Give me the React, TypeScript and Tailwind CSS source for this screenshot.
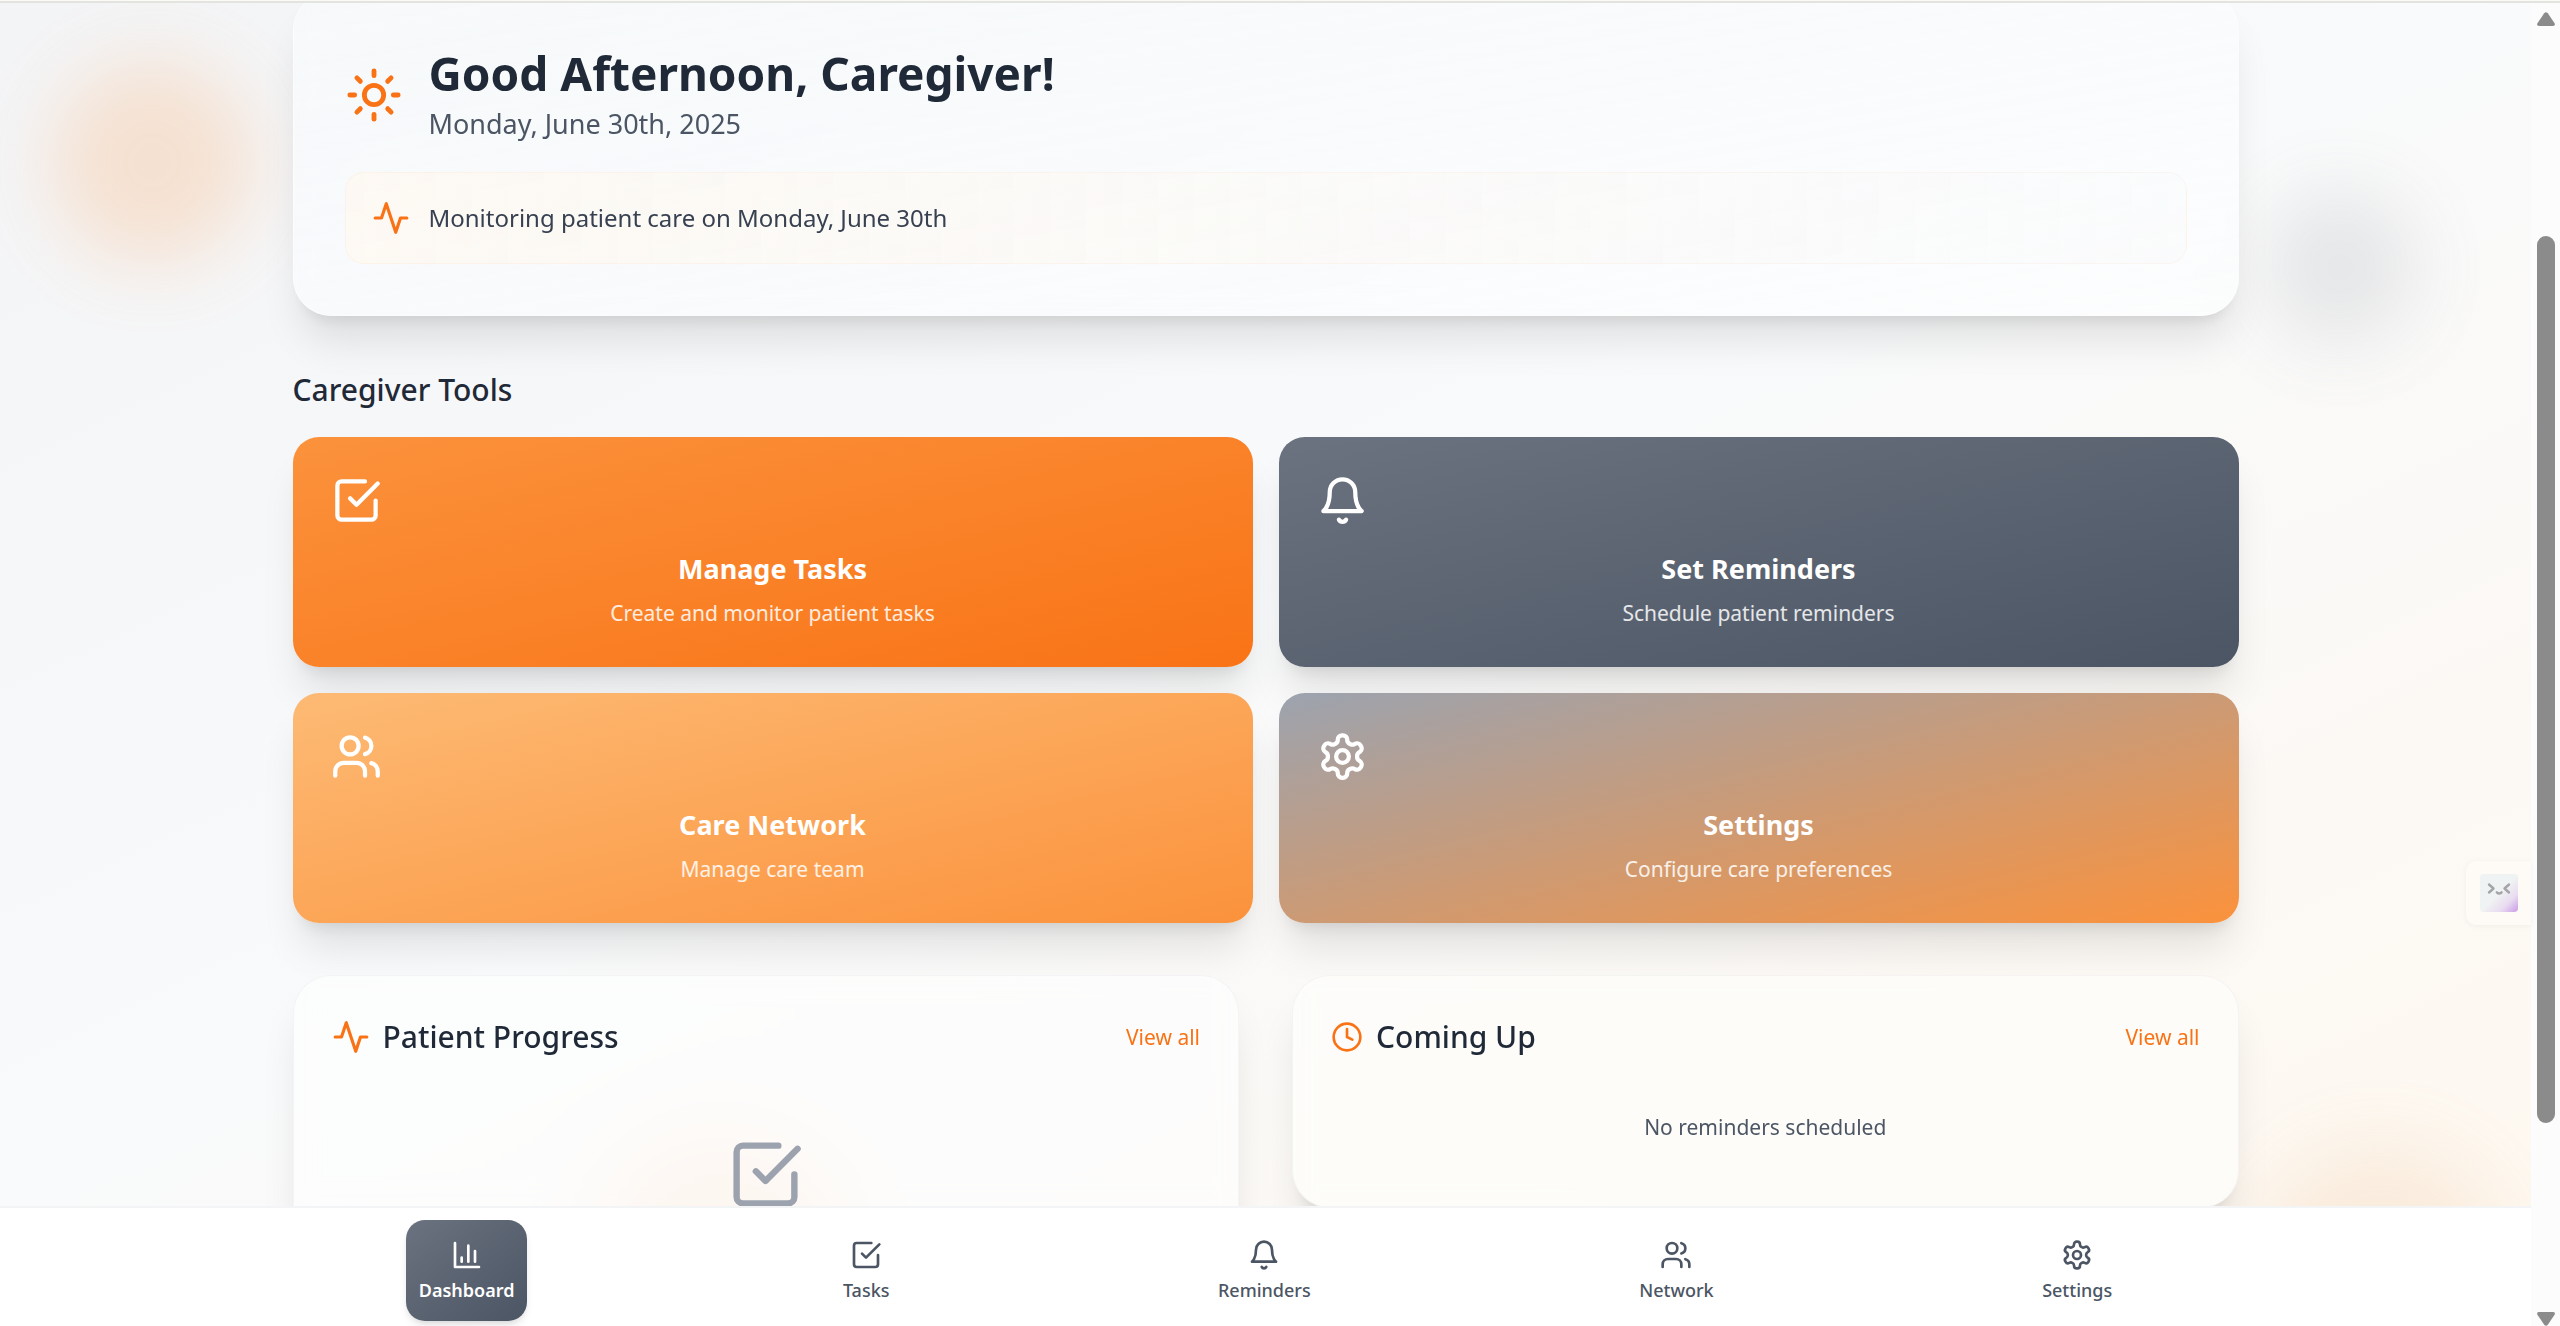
import type { ReactNode } from "react";

function Icon({ className, children }: { className: string; children: ReactNode }) {
  return (
    <svg
      className={`shrink-0 ${className}`}
      viewBox="0 0 24 24"
      fill="none"
      stroke="currentColor"
      strokeWidth="2"
      strokeLinecap="round"
      strokeLinejoin="round"
      aria-hidden="true"
    >
      {children}
    </svg>
  );
}

type IconProps = { className: string };

const SunIcon = ({ className }: IconProps) => (
  <Icon className={className}>
    <circle cx="12" cy="12" r="4" />
    <path d="M12 2v2" />
    <path d="M12 20v2" />
    <path d="m4.93 4.93 1.41 1.41" />
    <path d="m17.66 17.66 1.41 1.41" />
    <path d="M2 12h2" />
    <path d="M20 12h2" />
    <path d="m6.34 17.66-1.41 1.41" />
    <path d="m19.07 4.93-1.41 1.41" />
  </Icon>
);

const PulseIcon = ({ className }: IconProps) => (
  <Icon className={className}>
    <path d="M22 12h-4l-3 9L9 3l-3 9H2" />
  </Icon>
);

const ClockIcon = ({ className }: IconProps) => (
  <Icon className={className}>
    <circle cx="12" cy="12" r="10" />
    <path d="M12 6v6l4 2" />
  </Icon>
);

const TaskIcon = ({ className }: IconProps) => (
  <Icon className={className}>
    <path d="m9 11 3 3L22 4" />
    <path d="M21 12v7a2 2 0 0 1-2 2H5a2 2 0 0 1-2-2V5a2 2 0 0 1 2-2h11" />
  </Icon>
);

const BellIcon = ({ className }: IconProps) => (
  <Icon className={className}>
    <path d="M6 8a6 6 0 0 1 12 0c0 7 3 9 3 9H3s3-2 3-9" />
    <path d="M10.3 21a1.94 1.94 0 0 0 3.4 0" />
  </Icon>
);

const PeopleIcon = ({ className }: IconProps) => (
  <Icon className={className}>
    <path d="M16 21v-2a4 4 0 0 0-4-4H6a4 4 0 0 0-4 4v2" />
    <circle cx="9" cy="7" r="4" />
    <path d="M22 21v-2a4 4 0 0 0-3-3.87" />
    <path d="M16 3.13a4 4 0 0 1 0 7.75" />
  </Icon>
);

const GearIcon = ({ className }: IconProps) => (
  <Icon className={className}>
    <path d="M12.22 2h-.44a2 2 0 0 0-2 2v.18a2 2 0 0 1-1 1.73l-.43.25a2 2 0 0 1-2 0l-.15-.08a2 2 0 0 0-2.73.73l-.22.38a2 2 0 0 0 .73 2.73l.15.1a2 2 0 0 1 1 1.72v.51a2 2 0 0 1-1 1.74l-.15.09a2 2 0 0 0-.73 2.73l.22.38a2 2 0 0 0 2.73.73l.15-.08a2 2 0 0 1 2 0l.43.25a2 2 0 0 1 1 1.73V20a2 2 0 0 0 2 2h.44a2 2 0 0 0 2-2v-.18a2 2 0 0 1 1-1.73l.43-.25a2 2 0 0 1 2 0l.15.08a2 2 0 0 0 2.73-.73l.22-.39a2 2 0 0 0-.73-2.73l-.15-.08a2 2 0 0 1-1-1.74v-.5a2 2 0 0 1 1-1.74l.15-.09a2 2 0 0 0 .73-2.73l-.22-.38a2 2 0 0 0-2.73-.73l-.15.08a2 2 0 0 1-2 0l-.43-.25a2 2 0 0 1-1-1.73V4a2 2 0 0 0-2-2z" />
    <circle cx="12" cy="12" r="3" />
  </Icon>
);

const ChartIcon = ({ className }: IconProps) => (
  <Icon className={className}>
    <path d="M3 3v18h18" />
    <path d="M18 17V9" />
    <path d="M13 17V5" />
    <path d="M8 17v-3" />
  </Icon>
);

const tools = [
  {
    title: "Manage Tasks",
    text: "Create and monitor patient tasks",
    icon: TaskIcon,
    fill: "bg-[linear-gradient(to_bottom_right,#fb923c,#f97316)]",
  },
  {
    title: "Set Reminders",
    text: "Schedule patient reminders",
    icon: BellIcon,
    fill: "bg-[linear-gradient(to_bottom_right,#6b7280,#4b5563)]",
  },
  {
    title: "Care Network",
    text: "Manage care team",
    icon: PeopleIcon,
    fill: "bg-[linear-gradient(to_bottom_right,#fdba74,#fb923c)]",
  },
  {
    title: "Settings",
    text: "Configure care preferences",
    icon: GearIcon,
    fill: "bg-[linear-gradient(to_bottom_right,#9ca3af,#fb923c)]",
  },
];

const navItems = [
  { label: "Dashboard", icon: ChartIcon, active: true },
  { label: "Tasks", icon: TaskIcon, active: false },
  { label: "Reminders", icon: BellIcon, active: false },
  { label: "Network", icon: PeopleIcon, active: false },
  { label: "Settings", icon: GearIcon, active: false },
];

const SOFT_SHADOW = "shadow-[0_32px_40px_-8px_rgba(0,0,0,0.1),0_13px_16px_-10px_rgba(0,0,0,0.1)]";

function Backdrop() {
  return (
    <div className="pointer-events-none absolute inset-0 overflow-hidden" aria-hidden="true">
      <div className="absolute top-[57px] left-[50px] size-[205px] rounded-full bg-[#fb923c] opacity-20 blur-[38px]" />
      <div className="absolute top-[187px] right-[114px] size-[154px] rounded-full bg-[#6b7280] opacity-[0.14] blur-[38px]" />
      <div className="absolute -bottom-[184px] left-[592px] size-[256px] rounded-full bg-[#fb923c] opacity-20 blur-[38px]" />
      <div className="absolute -bottom-[192px] right-[24px] size-[256px] rounded-full bg-[#e0954f] opacity-[0.12] blur-[38px]" />
    </div>
  );
}

function PanelHeader({ icon, title }: { icon: ReactNode; title: string }) {
  return (
    <div className="flex items-center justify-between">
      <div className="flex items-center gap-[13px]">
        {icon}
        <h3 className="text-[30px] leading-[45px] font-medium text-[#1f2937]">{title}</h3>
      </div>
      <button type="button" className="text-[21px] leading-8 text-[#f97316]">
        View all
      </button>
    </div>
  );
}

function ScrollTrack() {
  return (
    <div className="flex w-[29px] shrink-0 flex-col items-center bg-[#fcfcfc] pt-[9px]" aria-hidden="true">
      <svg className="h-[14px] w-[18px]" viewBox="0 0 18 14" fill="#8b8b8b">
        <path d="M7.2 1.2Q9-.8 10.8 1.2L17.6 11.2Q18.6 14 16 14H2Q-.6 14 .4 11.2Z" />
      </svg>
      <div className="flex w-full flex-1 flex-col items-center pt-[210px] pb-[189px]">
        <div className="w-[18px] flex-1 rounded-full bg-[#8b8b8b]" />
      </div>
      <svg className="h-[14px] w-[18px]" viewBox="0 0 18 14" fill="#8b8b8b">
        <path d="M7.2 12.8Q9 14.8 10.8 12.8L17.6 2.8Q18.6 0 16 0H2Q-.6 0 .4 2.8Z" />
      </svg>
    </div>
  );
}

export default function App() {
  return (
    <div className="flex h-screen flex-col overflow-hidden bg-white font-['Noto_Sans','Open_Sans',sans-serif]">
      <div className="h-[3px] shrink-0 border-b-2 border-[#e3e4de] bg-[#fbfaf6]" />
      <div className="flex min-h-0 flex-1">
        <div className="relative flex min-w-0 flex-1 flex-col">
          <main className="relative min-h-0 flex-1 overflow-hidden bg-[linear-gradient(to_bottom_right,#f3f4f6,#f9fafb_50%,#fef8f0)]">
            <Backdrop />
            <div className="relative mx-auto -mt-[11px] w-full max-w-[2048px] px-[51px]">
              <header
                className={`rounded-[38px] border border-white/40 bg-[linear-gradient(to_bottom_right,rgba(247,249,251,0.85),rgba(253,254,255,0.7))] p-[51px] backdrop-blur-md ${SOFT_SHADOW}`}
              >
                <div className="mb-[26px] flex items-center gap-[26px]">
                  <SunIcon className="size-[58px] text-[#f97316]" />
                  <div>
                    <h1 className="text-[46px] leading-[58px] font-bold text-[#1f2937]">Good Afternoon, Caregiver!</h1>
                    <p className="text-[27px] leading-[44px] text-[#4b5563]">Monday, June 30th, 2025</p>
                  </div>
                </div>
                <div className="flex items-center gap-[19px] rounded-[19px] border border-[#f97316]/5 bg-[linear-gradient(to_right,rgba(255,247,237,0.6),rgba(249,250,251,0.4))] p-[26px]">
                  <PulseIcon className="size-[38px] text-[#f97316]" />
                  <p className="text-[24px] leading-[38px] text-[#374151]">Monitoring patient care on Monday, June 30th</p>
                </div>
              </header>

              <section className="mt-[51px]">
                <h2 className="mb-[25px] text-[30px] leading-[45px] font-medium text-[#1f2937]">Caregiver Tools</h2>
                <div className="grid grid-cols-2 gap-[26px]">
                  {tools.map(({ title, text, icon: ToolIcon, fill }) => (
                    <button
                      key={title}
                      type="button"
                      className={`flex flex-col rounded-[26px] p-[38px] text-center text-white ${fill} ${SOFT_SHADOW}`}
                    >
                      <ToolIcon className="size-[51px]" />
                      <span className="mt-5 w-full text-[27px] leading-[45px] font-bold">{title}</span>
                      <span className="mt-[6px] w-full text-[21px] leading-8 text-white/85">{text}</span>
                    </button>
                  ))}
                </div>
              </section>

              <div className="mt-[52px] grid grid-cols-2 items-start gap-[53px]">
                <section
                  className={`rounded-[38px] border border-[#e5e7eb]/40 bg-[#fdfefe]/70 p-[38px] backdrop-blur-md ${SOFT_SHADOW}`}
                >
                  <PanelHeader icon={<PulseIcon className="size-[38px] text-[#f97316]" />} title="Patient Progress" />
                  <div className="mt-[26px] flex justify-center py-[51px]">
                    <TaskIcon className="size-[77px] text-[#9ca3af]" />
                  </div>
                </section>
                <section
                  className={`rounded-[38px] border border-[#e5e7eb]/40 bg-[#fdfdfb]/70 p-[38px] backdrop-blur-md ${SOFT_SHADOW}`}
                >
                  <PanelHeader icon={<ClockIcon className="size-8 text-[#f97316]" />} title="Coming Up" />
                  <p className="mt-[26px] py-[26px] text-center text-[21px] leading-8 text-[#4b5563]">
                    No reminders scheduled
                  </p>
                </section>
              </div>
            </div>
          </main>

          <nav className="shrink-0 border-t-2 border-[#f3f4f6] bg-white" aria-label="Main">
            <div className="mx-auto flex max-w-[2048px] justify-around px-[13px] pt-3 pb-[5px]">
              {navItems.map(({ label, icon: NavIcon, active }) => (
                <button
                  key={label}
                  type="button"
                  aria-current={active ? "page" : undefined}
                  className={
                    active
                      ? "flex flex-col items-center gap-[6px] rounded-[19px] bg-[linear-gradient(to_bottom_right,#6b7280,#4b5563)] px-[13px] pt-[19px] pb-[18px] text-[18px] leading-[26px] font-semibold text-white shadow-[0_6px_10px_-2px_rgba(0,0,0,0.1),0_3px_6px_-3px_rgba(0,0,0,0.1)]"
                      : "flex flex-col items-center gap-[6px] rounded-[19px] px-[13px] pt-[19px] pb-[18px] text-[18px] leading-[26px] font-medium text-[#4b5563]"
                  }
                >
                  <NavIcon className="size-8" />
                  {label}
                </button>
              ))}
            </div>
          </nav>

          <button
            type="button"
            aria-label="Open assistant"
            className="absolute top-[858px] right-0 flex h-[64px] w-[65px] items-center rounded-l-[10px] bg-[#fefaf5] pl-[14px] shadow-[0_1px_6px_rgba(0,0,0,0.05)]"
          >
            <svg className="size-[38px]" viewBox="0 0 38 38" fill="none" aria-hidden="true">
              <defs>
                <linearGradient id="face" x1="0" y1="0" x2="1" y2="1">
                  <stop offset="0.5" stopColor="#f0f3f3" />
                  <stop offset="0.75" stopColor="#e9dcf0" />
                  <stop offset="1" stopColor="#c99be6" />
                </linearGradient>
              </defs>
              <rect width="38" height="38" rx="4" fill="url(#face)" />
              <g stroke="#a3a5a8" strokeWidth="2.4" strokeLinecap="round" strokeLinejoin="round">
                <path d="m9 10.500 4.500 4-4.500 4" />
                <path d="m29 10.500-4.500 4 4.500 4" />
                <path d="M16.800 18.300q2.400 2.400 4.800 0" />
              </g>
            </svg>
          </button>
        </div>
        <ScrollTrack />
      </div>
    </div>
  );
}
